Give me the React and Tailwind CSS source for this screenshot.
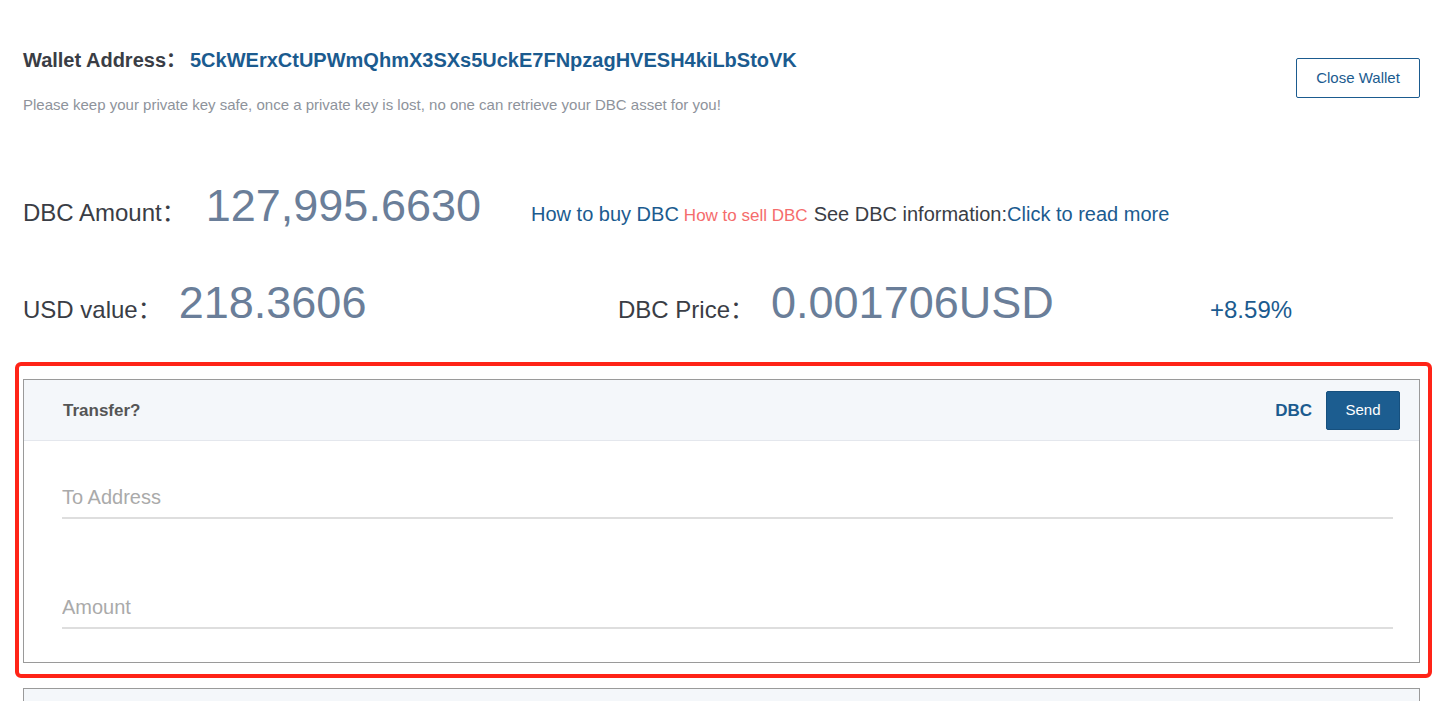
import React from 'react';

const font = "font-['Liberation_Sans','Noto_Sans_CJK_SC',sans-serif]";

const App = () => {
  return (
    <div className={`min-h-screen bg-white pl-[23px] pr-[22px] pt-[47px] pb-10 text-[#333] ${font}`}>
      {/* Wallet header */}
      <div className="flex justify-between items-start">
        <div>
          <div className="flex text-[20px] leading-[26px] font-bold">
            <span className="text-[#3a3d45]">Wallet Address：</span>
            <span className="ml-[4px] text-[#1b5b8f]">5CkWErxCtUPWmQhmX3SXs5UckE7FNpzagHVESH4kiLbStoVK</span>
          </div>
          <p className="mt-[22px] text-[15px] leading-[20px] text-[#8e939b]">
            Please keep your private key safe, once a private key is lost, no one can retrieve your DBC asset for you!
          </p>
        </div>
        <button className="mt-[11px] h-[40px] w-[124px] rounded-[2px] border border-[#1b5b8f] text-[15px] text-[#1b5b8f] bg-white">
          Close Wallet
        </button>
      </div>

      {/* DBC amount */}
      <div className="mt-[68px] flex items-baseline h-[45px]">
        <span className="text-[24px] text-[#3a3d45]">DBC Amount：</span>
        <span className="ml-[20px] text-[45px] leading-[45px] text-[#6a7e99]">127,995.6630</span>
        <span className="ml-[50px] text-[20px] text-[#1b5b8f]">How to buy DBC</span>
        <span className="ml-[5px] text-[17px] text-[#f56c6c]">How to sell DBC</span>
        <span className="ml-[6px] text-[20px] text-[#3a3d45]">See DBC information:</span>
        <span className="text-[20px] text-[#1b5b8f]">Click to read more</span>
      </div>

      {/* USD / price */}
      <div className="mt-[52px] flex items-baseline h-[45px]">
        <div className="w-[595px] flex items-baseline">
          <span className="text-[24px] text-[#3a3d45]">USD value：</span>
          <span className="ml-[17px] text-[45px] leading-[45px] text-[#6a7e99]">218.3606</span>
        </div>
        <div className="w-[592px] flex items-baseline">
          <span className="text-[24px] text-[#3a3d45]">DBC Price：</span>
          <span className="ml-[17px] text-[45px] leading-[45px] text-[#6a7e99]">0.001706USD</span>
        </div>
        <span className="text-[24px] text-[#1b5b8f]">+8.59%</span>
      </div>

      {/* Transfer card */}
      <div className="relative mt-[54px]">
        <div className="border border-[#9a9a9a] bg-white">
          <div className="flex items-center justify-between h-[61px] pl-[39px] pr-[19px] pt-[1px] bg-[#f4f7fa] border-b border-[#e4e7ed]">
            <span className="text-[17px] font-bold text-[#555]">Transfer?</span>
            <div className="flex items-center gap-[14px]">
              <span className="text-[17px] font-bold text-[#1b5b8f]">DBC</span>
              <button className="h-[39px] w-[74px] rounded-[2px] border border-[#16507e] bg-[#1c5d90] text-[15px] text-white">
                Send
              </button>
            </div>
          </div>
          <div className="pl-[38px] pr-[26px] pt-[37px] pb-[33px] flex flex-col gap-[69px]">
            <input
              placeholder="To Address"
              className="h-[41px] w-full border-b-2 border-[#dedede] bg-transparent text-[20px] text-[#333] placeholder:text-[#aaa] outline-none"
            />
            <input
              placeholder="Amount"
              className="h-[41px] w-full border-b-2 border-[#dedede] bg-transparent text-[20px] text-[#333] placeholder:text-[#aaa] outline-none"
            />
          </div>
        </div>
        {/* red annotation frame */}
        <div className="pointer-events-none absolute -left-[8px] -right-[12px] -top-[17px] -bottom-[15px] rounded-[6px] border-4 border-[#ff2418]"></div>
      </div>

      {/* Next card */}
      <div className="mt-[25px] h-[60px] border border-[#9a9a9a] bg-[#f4f7fa]"></div>
    </div>
  );
};

export default App;
